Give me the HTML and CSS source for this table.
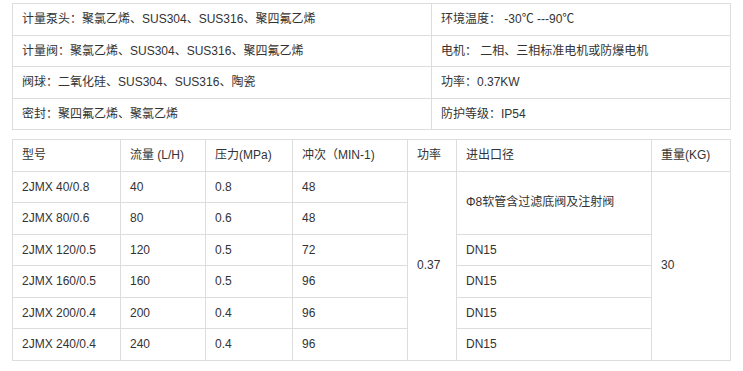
FILE: index.html
```html
<!DOCTYPE html>
<html lang="zh">
<head>
<meta charset="utf-8">
<link rel="stylesheet" href="styles.css">
</head>
<body>
<div class="page">
  <table class="spec">
    <colgroup><col class="c-left"><col class="c-right"></colgroup>
    <tr><td>计量泵头：聚氯乙烯、SUS304、SUS316、聚四氟乙烯</td><td>环境温度： -30℃ ---90℃</td></tr>
    <tr><td>计量阀：聚氯乙烯、SUS304、SUS316、聚四氟乙烯</td><td>电机： 二相、三相标准电机或防爆电机</td></tr>
    <tr><td>阀球：二氧化硅、SUS304、SUS316、陶瓷</td><td>功率：0.37KW</td></tr>
    <tr><td>密封：聚四氟乙烯、聚氯乙烯</td><td>防护等级：IP54</td></tr>
  </table>
  <table class="models">
    <colgroup>
      <col class="m1"><col class="m2"><col class="m3"><col class="m4"><col class="m5"><col class="m6"><col class="m7">
    </colgroup>
    <tr><td>型号</td><td>流量 (L/H)</td><td>压力(MPa)</td><td>冲次（MIN-1)</td><td>功率</td><td>进出口径</td><td>重量(KG)</td></tr>
    <tr><td>2JMX 40/0.8</td><td>40</td><td>0.8</td><td>48</td><td rowspan="6">0.37</td><td rowspan="2">Φ8软管含过滤底阀及注射阀</td><td rowspan="6">30</td></tr>
    <tr><td>2JMX 80/0.6</td><td>80</td><td>0.6</td><td>48</td></tr>
    <tr><td>2JMX 120/0.5</td><td>120</td><td>0.5</td><td>72</td><td>DN15</td></tr>
    <tr><td>2JMX 160/0.5</td><td>160</td><td>0.5</td><td>96</td><td>DN15</td></tr>
    <tr><td>2JMX 200/0.4</td><td>200</td><td>0.4</td><td>96</td><td>DN15</td></tr>
    <tr><td>2JMX 240/0.4</td><td>240</td><td>0.4</td><td>96</td><td>DN15</td></tr>
  </table>
</div>
</body>
</html>
```
FILE: styles.css
```css
html, body {
  margin: 0;
  padding: 0;
  background: #fff;
}
.page {
  display: flex;
  flex-direction: column;
  gap: 9px;
  padding: 3px 13px 0 12px;
  font-family: "Liberation Sans", Arial, "Noto Sans CJK SC", sans-serif;
  font-size: 12px;
  color: #333;
}
table {
  border-collapse: collapse;
  table-layout: fixed;
  width: 718px;
}
td {
  border: 1px solid #ddd;
  padding: 5px 9px;
  line-height: 20.5px;
  height: 20.5px;
  vertical-align: middle;
  white-space: nowrap;
  text-align: left;
}
.c-left { width: 419px; }
.c-right { width: 299px; }
.m1 { width: 108px; }
.m2 { width: 85px; }
.m3 { width: 87px; }
.m4 { width: 115px; }
.m5 { width: 49px; }
.m6 { width: 195px; }
.m7 { width: 79px; }
```
